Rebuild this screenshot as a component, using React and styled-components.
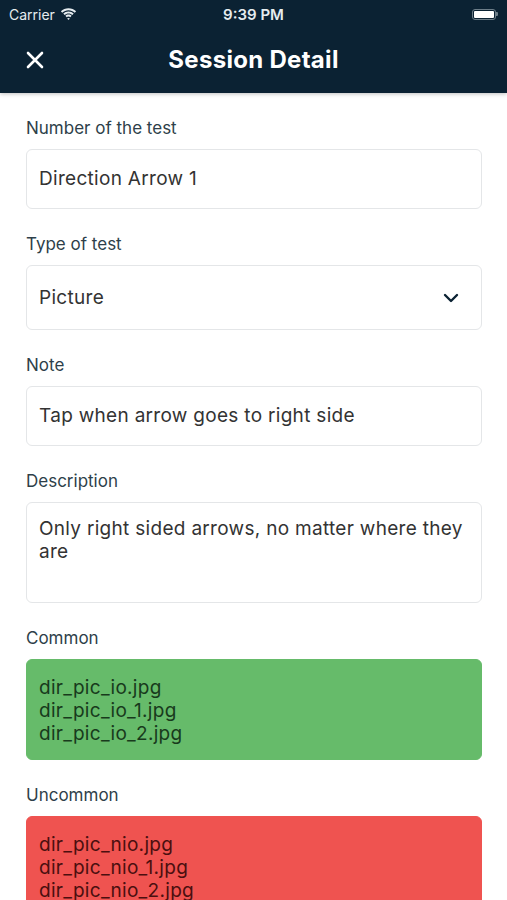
import styled, { createGlobalStyle } from "styled-components";

const GlobalStyle = createGlobalStyle`
  * { box-sizing: border-box; }
  body {
    margin: 0;
    background: #ffffff;
    font-family: Inter, "Noto Sans", "Liberation Sans", sans-serif;
  }
`;

const Page = styled.div`
  width: 507px;
  height: 900px;
  overflow: hidden;
  background: #ffffff;
`;

const Top = styled.div`
  background: #0b2233;
  box-shadow: 0 1px 4px rgba(0, 0, 0, 0.25);
  position: relative;
  z-index: 1;
`;

const StatusBar = styled.div`
  height: 28px;
  display: grid;
  grid-template-columns: 1fr auto 1fr;
  align-items: center;
  padding: 0 9px;
  color: #e6ecef;
  font-size: 14px;
`;

const Carrier = styled.div`
  display: flex;
  align-items: center;
  gap: 5px;
`;

const Clock = styled.div`
  font-weight: 600;
  font-size: 15px;
`;

const Battery = styled.div`
  justify-self: end;
  display: flex;
  align-items: center;
`;

const BatteryBody = styled.div`
  width: 24px;
  height: 11px;
  border: 1.5px solid #6c7d88;
  border-radius: 3px;
  padding: 1px;
  &::after {
    content: "";
    display: block;
    width: 100%;
    height: 100%;
    background: #ffffff;
    border-radius: 1px;
  }
`;

const BatteryTip = styled.div`
  width: 2px;
  height: 4px;
  background: #6c7d88;
  border-radius: 0 1px 1px 0;
`;

const NavBar = styled.div`
  height: 65px;
  display: grid;
  grid-template-columns: 60px 1fr 60px;
  align-items: center;
`;

const Close = styled.button`
  background: none;
  border: none;
  padding: 0 0 0 26px;
  display: flex;
  align-items: center;
  color: #ffffff;
  margin-top: -2px;
`;

const Title = styled.h1`
  margin: 0;
  text-align: center;
  color: #ffffff;
  font-size: 24px;
  letter-spacing: 0.3px;
  font-weight: 700;
  margin-top: -2px;
`;

const Content = styled.div`
  padding: 25px 25px 0 26px;
  display: flex;
  flex-direction: column;
  gap: 25px;
`;

const Field = styled.div`
  display: flex;
  flex-direction: column;
`;

const Label = styled.div`
  font-size: 17px;
  line-height: 20px;
  color: #2e3f4a;
  margin-bottom: 11px;
`;

const Box = styled.div`
  min-height: ${(p) => p.$h}px;
  border: 1px solid ${(p) => (p.$bg ? p.$bg : "#e4e6e8")};
  border-radius: 6px;
  background: ${(p) => p.$bg || "#ffffff"};
  color: ${(p) => p.$color || "#333333"};
  font-size: 19px;
  letter-spacing: 0.3px;
  line-height: ${(p) => (p.$multi ? "23px" : "24px")};
  padding: ${(p) => (p.$multi ? `${p.$pt}px 8px 0 12px` : "0 12px")};
  display: flex;
  align-items: ${(p) => (p.$multi ? "flex-start" : "center")};
  flex-direction: ${(p) => (p.$multi ? "column" : "row")};
  justify-content: ${(p) => (p.$multi ? "flex-start" : "space-between")};
`;

const Chevron = styled.svg`
  margin-right: 10px;
`;

const files = {
  common: ["dir_pic_io.jpg", "dir_pic_io_1.jpg", "dir_pic_io_2.jpg"],
  uncommon: ["dir_pic_nio.jpg", "dir_pic_nio_1.jpg", "dir_pic_nio_2.jpg"],
};

export default function App() {
  return (
    <Page>
      <GlobalStyle />
      <Top>
        <StatusBar>
          <Carrier>
            Carrier
            <svg width="17" height="12" viewBox="0 0 17 12">
              <path d="M8.5 2.2c2.4 0 4.6.9 6.3 2.5l1.3-1.4C14.1 1.3 11.4.2 8.5.2S2.9 1.3.9 3.3l1.3 1.4C3.9 3.1 6.1 2.2 8.5 2.2z" fill="#e6ecef" />
              <path d="M8.5 5.5c1.5 0 2.8.6 3.9 1.5l1.3-1.4C12.3 4.3 10.5 3.5 8.5 3.5S4.7 4.3 3.3 5.6l1.3 1.4c1.1-.9 2.4-1.5 3.9-1.5z" fill="#e6ecef" />
              <path d="M8.5 8.6c.7 0 1.3.2 1.8.6l1.3-1.4C10.8 7.1 9.7 6.6 8.5 6.6s-2.3.5-3.1 1.2l1.3 1.4c.5-.4 1.1-.6 1.8-.6z" fill="#e6ecef" />
              <path d="M8.5 12l1.4-1.5c-.4-.3-.9-.5-1.4-.5s-1 .2-1.4.5z" fill="#e6ecef" />
            </svg>
          </Carrier>
          <Clock>9:39 PM</Clock>
          <Battery>
            <BatteryBody />
            <BatteryTip />
          </Battery>
        </StatusBar>
        <NavBar>
          <Close aria-label="close">
            <svg width="18" height="18" viewBox="0 0 18 18">
              <path d="M2 2L16 16M16 2L2 16" stroke="#ffffff" strokeWidth="2.6" strokeLinecap="round" />
            </svg>
          </Close>
          <Title>Session Detail</Title>
          <div />
        </NavBar>
      </Top>
      <Content>
        <Field>
          <Label>Number of the test</Label>
          <Box $h={60}>Direction Arrow 1</Box>
        </Field>
        <Field>
          <Label>Type of test</Label>
          <Box $h={65}>
            Picture
            <Chevron width="16" height="10" viewBox="0 0 16 10">
              <path d="M2 2l6 6 6-6" fill="none" stroke="#0b2233" strokeWidth="2.4" strokeLinecap="round" strokeLinejoin="round" />
            </Chevron>
          </Box>
        </Field>
        <Field>
          <Label>Note</Label>
          <Box $h={60}>Tap when arrow goes to right side</Box>
        </Field>
        <Field>
          <Label>Description</Label>
          <Box $h={101} $multi $pt={14}>
            Only right sided arrows, no matter where they are
          </Box>
        </Field>
        <Field>
          <Label>Common</Label>
          <Box $h={101} $multi $pt={16} $bg="#66bb6a" $color="#183a1c">
            {files.common.map((f) => (
              <div key={f}>{f}</div>
            ))}
          </Box>
        </Field>
        <Field>
          <Label>Uncommon</Label>
          <Box $h={101} $multi $pt={16} $bg="#ef5350" $color="#4a0f0f">
            {files.uncommon.map((f) => (
              <div key={f}>{f}</div>
            ))}
          </Box>
        </Field>
      </Content>
    </Page>
  );
}
